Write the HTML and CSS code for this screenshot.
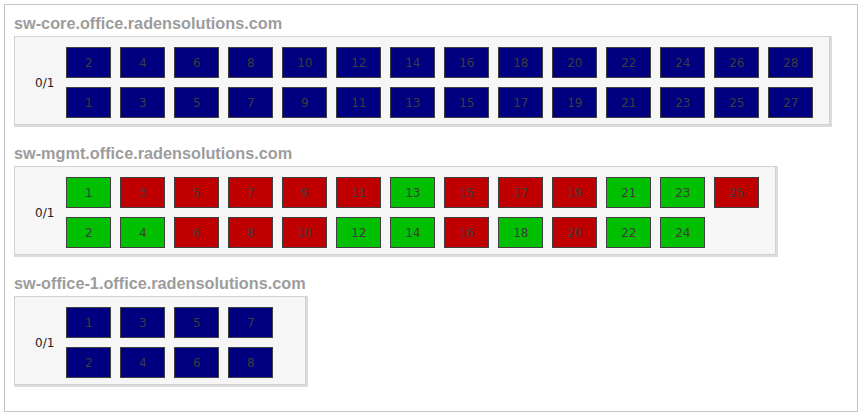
FILE: index.html
```html
<!DOCTYPE html>
<html>
<head>
<meta charset="utf-8">
<link rel="stylesheet" href="styles.css">
</head>
<body>
<div class="frame">
  <div class="switch">
    <div class="title">sw-core.office.radensolutions.com</div>
    <div class="panel">
      <div class="label">0/1</div>
      <div class="ports">
        <div class="row">
          <div class="port blue">2</div><div class="port blue">4</div><div class="port blue">6</div><div class="port blue">8</div><div class="port blue">10</div><div class="port blue">12</div><div class="port blue">14</div><div class="port blue">16</div><div class="port blue">18</div><div class="port blue">20</div><div class="port blue">22</div><div class="port blue">24</div><div class="port blue">26</div><div class="port blue">28</div>
        </div>
        <div class="row">
          <div class="port blue">1</div><div class="port blue">3</div><div class="port blue">5</div><div class="port blue">7</div><div class="port blue">9</div><div class="port blue">11</div><div class="port blue">13</div><div class="port blue">15</div><div class="port blue">17</div><div class="port blue">19</div><div class="port blue">21</div><div class="port blue">23</div><div class="port blue">25</div><div class="port blue">27</div>
        </div>
      </div>
    </div>
  </div>
  <div class="switch">
    <div class="title">sw-mgmt.office.radensolutions.com</div>
    <div class="panel">
      <div class="label">0/1</div>
      <div class="ports">
        <div class="row">
          <div class="port green">1</div><div class="port red">3</div><div class="port red">5</div><div class="port red">7</div><div class="port red">9</div><div class="port red">11</div><div class="port green">13</div><div class="port red">15</div><div class="port red">17</div><div class="port red">19</div><div class="port green">21</div><div class="port green">23</div><div class="port red">25</div>
        </div>
        <div class="row">
          <div class="port green">2</div><div class="port green">4</div><div class="port red">6</div><div class="port red">8</div><div class="port red">10</div><div class="port green">12</div><div class="port green">14</div><div class="port red">16</div><div class="port green">18</div><div class="port red">20</div><div class="port green">22</div><div class="port green">24</div>
        </div>
      </div>
    </div>
  </div>
  <div class="switch">
    <div class="title">sw-office-1.office.radensolutions.com</div>
    <div class="panel">
      <div class="label">0/1</div>
      <div class="ports">
        <div class="row">
          <div class="port blue">1</div><div class="port blue">3</div><div class="port blue">5</div><div class="port blue">7</div>
        </div>
        <div class="row">
          <div class="port blue">2</div><div class="port blue">4</div><div class="port blue">6</div><div class="port blue">8</div>
        </div>
      </div>
    </div>
  </div>
</div>
</body>
</html>
```
FILE: styles.css
```css
html, body {
  margin: 0;
  padding: 0;
  background: #ffffff;
}
body {
  padding: 4px;
}
.frame {
  width: 854px;
  height: 408px;
  box-sizing: border-box;
  border: 1px solid #c4c4c4;
  padding: 9px 9px 0 9px;
  background: #ffffff;
  display: flex;
  flex-direction: column;
  align-items: flex-start;
}
.switch {
  display: flex;
  flex-direction: column;
  margin-bottom: 19px;
}
.title {
  font-family: "Liberation Sans", Arial, sans-serif;
  font-weight: bold;
  font-size: 16.25px;
  line-height: 18px;
  color: #9c9c9c;
  margin-bottom: 4px;
}
.panel {
  display: flex;
  align-items: center;
  background: #f6f6f6;
  border: 1px solid #d2d2d2;
  box-shadow: 1px 1px 0 1px #dcdcdc;
  padding: 10px 16px 6px 20px;
}
.label {
  font-family: "DejaVu Sans", Verdana, sans-serif;
  font-size: 12px;
  color: #222;
  margin-right: 12px;
}
.ports {
  display: flex;
  flex-direction: column;
  gap: 9px;
}
.row {
  display: flex;
  gap: 9px;
}
.port {
  width: 45px;
  height: 31px;
  box-sizing: border-box;
  border: 1px solid #404040;
  display: flex;
  align-items: center;
  justify-content: center;
  font-family: "DejaVu Sans", Verdana, sans-serif;
  font-size: 12px;
  color: #3c3c3c;
}
.blue { background: #000080; }
.green { background: #00c000; }
.red { background: #c00000; }
```
